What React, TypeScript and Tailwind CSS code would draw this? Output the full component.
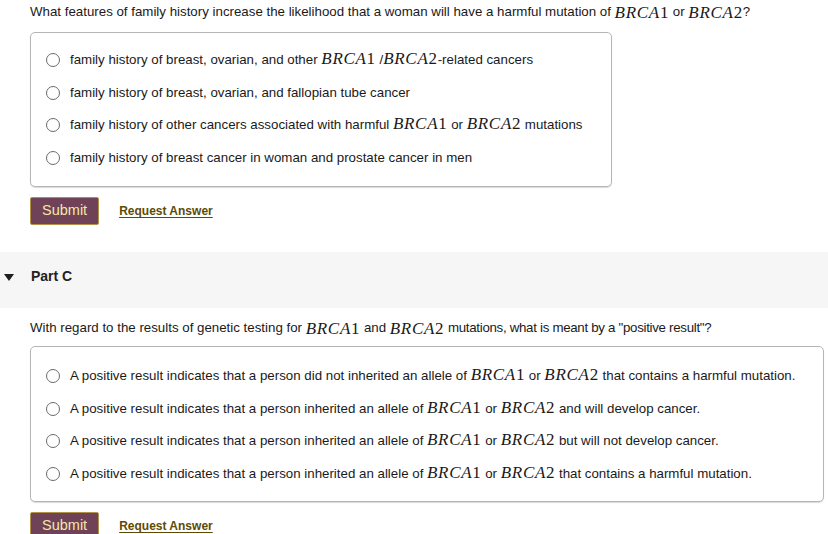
import React from "react";

const M: React.FC<{ v: string; n: string }> = ({ v, n }) => (
  <span className="font-['Liberation_Serif',serif] text-[17px] tracking-[0.7px] leading-none">
    <i>{v}</i>
    {n}
  </span>
);

const B1 = () => <M v="BRCA" n="1" />;
const B2 = () => <M v="BRCA" n="2" />;

const Option: React.FC<{ children: React.ReactNode }> = ({ children }) => (
  <div className="flex items-center h-[32.5px]">
    <span className="w-[14px] h-[14px] rounded-full border border-[#6b6b6b] bg-white shrink-0" />
    <span className="ml-[10px]">{children}</span>
  </div>
);

const Actions = () => (
  <div className="flex items-center gap-[20px] mt-[10px] ml-[30px]">
    <button className="h-[28px] px-[11px] bg-[#6f4257] text-[#f4e7a6] text-[14.5px] border border-[#b39248] rounded-[2px]">
      Submit
    </button>
    <a className="text-[12px] font-bold text-[#5d4b05] underline underline-offset-2">Request Answer</a>
  </div>
);

export default function App() {
  return (
    <div className="w-[828px] h-[534px] overflow-hidden bg-white text-[#1a1a1a] text-[13.3px] font-['Liberation_Sans',Arial,sans-serif]">
      <div className="pl-[30px] h-[24px] flex items-center">
        What features of family history increase the likelihood that a woman will have a harmful mutation of&nbsp;
        <B1 />&nbsp;or&nbsp;<B2 />?
      </div>
      <div className="ml-[30px] w-[582px] mt-[8px] h-[155px] border border-[#b5b5b5] rounded-[5px] shadow-[0_1px_1px_rgba(0,0,0,0.15)] pl-[15px] pt-[11px]">
        <Option>
          family history of breast, ovarian, and other <B1 /> /<B2 />-related cancers
        </Option>
        <Option>family history of breast, ovarian, and fallopian tube cancer</Option>
        <Option>
          family history of other cancers associated with harmful <B1 /> or <B2 /> mutations
        </Option>
        <Option>family history of breast cancer in woman and prostate cancer in men</Option>
      </div>
      <Actions />
      <div className="mt-[27px] h-[56px] bg-[#f6f6f6] flex items-center">
        <svg width="10" height="8" viewBox="0 0 10 8" className="ml-[4px] -mt-[4px]">
          <path d="M0 0 L10 0 L5 7 Z" fill="#1f1f1f" />
        </svg>
        <span className="ml-[17px] -mt-[8px] font-bold text-[14px] text-[#222]">Part C</span>
      </div>
      <div className="pl-[30px] pt-[2px] h-[38px] flex items-center">
        With regard to the results of genetic testing for&nbsp;<B1 />&nbsp;and&nbsp;<B2 />&nbsp;
        <span className="tracking-[-0.3px]">mutations, what is meant by a "positive result"?</span>
      </div>
      <div className="ml-[30px] w-[794px] h-[156px] border border-[#b5b5b5] rounded-[5px] shadow-[0_1px_1px_rgba(0,0,0,0.15)] pl-[15px] pt-[13px]">
        <Option>
          A positive result indicates that a person did not inherited an allele of <B1 /> or <B2 /> that contains a harmful mutation.
        </Option>
        <Option>
          A positive result indicates that a person inherited an allele of <B1 /> or <B2 /> and will develop cancer.
        </Option>
        <Option>
          A positive result indicates that a person inherited an allele of <B1 /> or <B2 /> but will not develop cancer.
        </Option>
        <Option>
          A positive result indicates that a person inherited an allele of <B1 /> or <B2 /> that contains a harmful mutation.
        </Option>
      </div>
      <Actions />
    </div>
  );
}
